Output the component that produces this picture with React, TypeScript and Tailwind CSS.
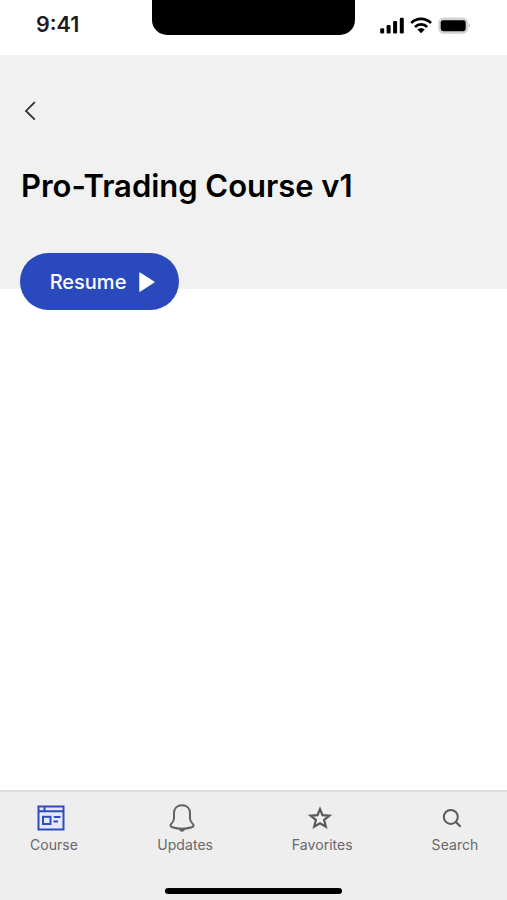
import type { ReactNode } from "react"

function StatusBar() {
  return (
    <div className="flex h-[55px] shrink-0 items-start bg-white">
      <span className="ml-[36px] mt-[10px] w-[116px] text-[21.5px] font-semibold leading-7 text-[#1d1d20]">9:41</span>
      <div className="h-[35px] w-[203px] rounded-b-[15px] bg-black" />
      <svg className="ml-[23px] mt-[16px]" width="94" height="19" viewBox="0 0 94 19">
        {/* signal */}
        <rect x="2.2" y="12.2" width="4" height="5.3" rx="1.3" />
        <rect x="8.6" y="9" width="4" height="8.5" rx="1.3" />
        <rect x="15.1" y="5" width="4" height="12.5" rx="1.3" />
        <rect x="21.8" y="1.8" width="4" height="15.7" rx="1.3" />
        {/* wifi */}
        <g fill="none" stroke="#000" strokeWidth="2.7">
          <path d="M33.2 7a14 14 0 0 1 19.8 0" />
          <path d="M37 11a8.6 8.6 0 0 1 12.2 0" />
        </g>
        <path d="M39.4 13.6a5.2 5.2 0 0 1 7.4 0L43.1 17.3z" />
        {/* battery */}
        <rect x="61.2" y="2.2" width="28" height="14.8" rx="4.5" fill="#d6d6d6" stroke="#d0d0d0" strokeWidth="1.6" />
        <rect x="62.7" y="4.2" width="25" height="11" rx="2.4" />
        <path d="M90.7 7.4q2.6 2.2 0 4.4z" fill="#bbb" />
      </svg>
    </div>
  )
}

function Tab({ label, width, children }: { label: string; width: string; children: ReactNode }) {
  return (
    <button className={`flex flex-col items-center ${width}`}>
      <span className="mr-[5px] flex h-[30px] items-center justify-center">{children}</span>
      <span className="mt-[2px] whitespace-nowrap text-[14px] leading-5 tracking-[0.05px] text-[#68686a]">{label}</span>
    </button>
  )
}

export default function App() {
  return (
    <div className="flex h-[900px] w-[507px] flex-col overflow-hidden bg-white font-['Inter',sans-serif]">
      <StatusBar />

      <header className="flex h-[234px] shrink-0 flex-col items-start bg-[#f1f1f1] pl-[20px]">
        <button className="ml-[3px] mt-[44px]">
          <svg width="14" height="24" viewBox="0 0 14 24" fill="none" stroke="#303030" strokeWidth="1.8">
            <path d="M11.8 3.2 3 11.9l8.8 8.8" />
          </svg>
        </button>
        <h1 className="ml-px mt-[43px] whitespace-nowrap text-[31px] font-semibold leading-10 tracking-[-0.03px] text-black">
          Pro-Trading Course v1
        </h1>
        <button className="mt-[47px] flex h-[57px] w-[159px] shrink-0 items-center rounded-full bg-[#2a49bd] pl-[29.5px] text-[20px] font-medium text-white">
          <span className="w-[77px]">Resume</span>
          <svg className="ml-[11px]" width="18" height="20" viewBox="0 0 18 20" fill="#fff" stroke="#fff" strokeLinejoin="round">
            <path d="M1.8.8v18.6L16.3 10.1z" />
          </svg>
        </button>
      </header>

      <main className="flex-1" />

      <nav className="flex h-[110px] shrink-0 flex-col items-center justify-between border-t-2 border-[#dcdcdd] bg-[#eeeeee] pb-[6px]">
        <div className="flex w-full justify-between pl-[30px] pr-[29px] pt-[11px]">
          <Tab label="Course" width="w-[48px]">
            <svg className="mr-px" width="28" height="26" viewBox="0 0 28 26" fill="none" stroke="#304cb9" strokeWidth="2">
              <rect x="1.5" y="1.5" width="25" height="23" fill="#e3e9fa" />
              <path d="M1.5 6.3h25M7.5 1.5v5" />
              <rect x="6" y="11.8" width="7.5" height="7.2" />
              <path d="M16.8 12h6.7M16.5 16.5h4.5" />
            </svg>
          </Tab>
          <Tab label="Updates" width="w-[55px]">
            <svg className="mr-px" width="26" height="30" viewBox="0 0 26 30" fill="none" stroke="#606164" strokeWidth="2" strokeLinejoin="round">
              <path d="M13 2.2C8.2 2.2 5 5.4 5 10v5.3c0 2.2-.9 3.8-2.5 5.3C.8 22.3 1.2 23.6 3.2 24.2c5.7 1.7 13.9 1.7 19.6 0 2-.6 2.4-1.900.7-3.600C21.900 19.100 21 17.500 21 15.300V10c0-4.600-3.200-7.800-8-7.800z" />
              <path d="M10 26h6c-.3 1.800-1.400 2.700-3 2.700S10.300 27.800 10 26z" fill="#606164" stroke="none" />
            </svg>
          </Tab>
          <Tab label="Favorites" width="w-[60px]">
            <svg width="24" height="24" viewBox="0 0 24 24" fill="none" stroke="#58595c" strokeWidth="2.2">
              <path d="M12 3.2l2.5 6 6.9.5-5.3 4.3 1.7 6.7L12 17.2 6.2 20.7l1.7-6.7-5.3-4.3 6.900-.5z" />
            </svg>
          </Tab>
          <Tab label="Search" width="w-[46px]">
            <svg width="20" height="20" viewBox="0 0 20 20" fill="none" stroke="#58595c" strokeWidth="2">
              <circle cx="8.8" cy="8.9" r="7" />
              <path d="M13.7 13.8l4.9 4.9" strokeWidth="2.2" />
            </svg>
          </Tab>
        </div>
        <div className="h-[6px] w-[177px] rounded-full bg-black" />
      </nav>
    </div>
  )
}
